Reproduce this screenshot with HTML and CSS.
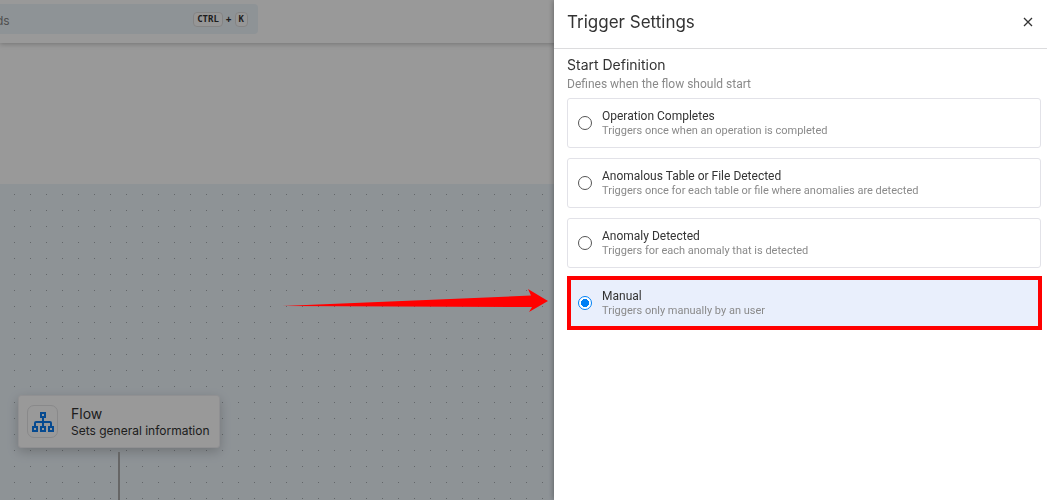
FILE: index.html
```html
<!DOCTYPE html>
<html lang="en">
<head>
<meta charset="utf-8">
<title>Trigger Settings</title>
<link rel="stylesheet" href="styles.css">
</head>
<body>
<div class="app">
  <header class="topbar">
    <div class="search">
      <input class="search-input" type="text" aria-label="Search" value="ds">
      <span class="shortcut"><kbd>CTRL</kbd><span>+</span><kbd>K</kbd></span>
    </div>
  </header>
  <section class="toolbar"></section>
  <main class="canvas">
    <article class="node">
      <span class="node-icon">
        <svg width="24" height="22" viewBox="0 0 24 22" fill="none" stroke="#0b7cf0" stroke-width="2">
          <rect x="10" y="2" width="4" height="4"/>
          <rect x="2" y="16" width="4" height="4"/>
          <rect x="10" y="16" width="4" height="4"/>
          <rect x="18" y="16" width="4" height="4"/>
          <path d="M12 6v10M4 16v-4q0-1 1-1h14q1 0 1 1v4"/>
        </svg>
      </span>
      <span class="node-text">
        <span class="node-title">Flow</span>
        <span class="node-sub">Sets general information</span>
      </span>
    </article>
    <span class="edge"></span>
  </main>
</div>
<div class="scrim"></div>
<svg class="arrow" width="266" height="24" viewBox="0 0 266 24"><path fill="#f00" d="M0 17 249 6.500 246 0 266 12 247 23 250 18Z"/></svg>
<aside class="drawer">
  <header class="drawer-head">
    <h1>Trigger Settings</h1>
    <button class="close" type="button" aria-label="Close">
      <svg width="10" height="10" viewBox="0 0 10 10" fill="none" stroke="#333" stroke-width="1.3"><path d="M1 1l8 8M9 1L1 9"/></svg>
    </button>
  </header>
  <form class="drawer-body">
    <h2>Start Definition</h2>
    <p class="hint">Defines when the flow should start</p>
    <div class="options">
      <label class="option"><input type="radio" name="start"><span class="option-text"><span class="option-title">Operation Completes</span><span class="option-sub">Triggers once when an operation is completed</span></span></label>
      <label class="option"><input type="radio" name="start"><span class="option-text"><span class="option-title">Anomalous Table or File Detected</span><span class="option-sub">Triggers once for each table or file where anomalies are detected</span></span></label>
      <label class="option"><input type="radio" name="start"><span class="option-text"><span class="option-title">Anomaly Detected</span><span class="option-sub">Triggers for each anomaly that is detected</span></span></label>
      <label class="option selected"><input type="radio" name="start" checked><span class="option-text"><span class="option-title">Manual</span><span class="option-sub">Triggers only manually by an user</span></span></label>
    </div>
  </form>
</aside>
</body>
</html>
```
FILE: styles.css
```css
* { box-sizing: border-box; }
body {
  margin: 0;
  font-family: Inter, "Liberation Sans", sans-serif;
  color: #333;
  overflow: hidden;
}
h1, h2, p { margin: 0; font-weight: 400; }

.app { display: flex; flex-direction: column; height: 100vh; background: #fff; }
.topbar {
  padding: 4px 0 9px;
  box-shadow: 0 1px 5px rgba(0, 0, 0, .25);
}
.search {
  display: flex;
  align-items: center;
  width: 258px;
  height: 30px;
  padding-right: 10px;
  background: #edf5fb;
  border-radius: 0 4px 4px 0;
}
.search-input {
  flex: 1;
  min-width: 0;
  margin-left: -4px;
  padding: 2px 0 0;
  border: 0;
  background: none;
  font: 12px Inter, sans-serif;
  color: #858585;
}
.shortcut { display: flex; align-items: center; gap: 3px; font: 700 10px "Noto Sans", sans-serif; }
kbd {
  padding: 0 3px;
  border: 1px solid #ddd;
  border-radius: 4px;
  background: #fafafa;
  font: 700 9px/13px "DejaVu Sans Mono", monospace;
}
.toolbar { flex: 0 0 141px; }
.canvas {
  flex: 1;
  padding: 211px 0 0 18px;
  background: #edf5fb radial-gradient(circle at 0 0, #a5abb0 0, #a5abb0 1px, transparent 1px) 14px 10px / 16px 16px;
}
.node {
  display: flex;
  align-items: center;
  gap: 13px;
  width: 202px;
  height: 53px;
  padding: 0 8px;
  background: #fff;
  border: 1px solid #f0f0f4;
  border-radius: 3px;
  box-shadow: 0 4px 12px rgba(0, 0, 0, .2);
}
.node-icon {
  display: grid;
  place-items: center;
  flex: 0 0 31px;
  height: 33px;
  border: 1px solid #e4e4e6;
  border-radius: 7px;
}
.node-text { display: flex; flex-direction: column; white-space: nowrap; }
.node-title { font-size: 14px; line-height: 18px; }
.node-sub { font-size: 12px; line-height: 16px; }
.edge { display: block; width: 2px; height: 60px; margin: 4px 0 0 100px; background: #aaa; }

.scrim { position: fixed; inset: 0; background: rgba(0, 0, 0, .4); }
.arrow { position: fixed; right: 499px; top: 289px; z-index: 2; }

.drawer {
  position: fixed;
  top: 0;
  right: 0;
  bottom: 0;
  width: 493px;
  background: #fff;
  box-shadow: 0 0 6px rgba(0, 0, 0, .4);
}
.drawer-head {
  display: flex;
  align-items: center;
  justify-content: space-between;
  height: 49px;
  padding: 0 13px 4px;
  border-bottom: 1px solid #dcdcde;
}
h1 { font-size: 17px; line-height: 24px; }
.close { display: grid; place-items: center; width: 12px; height: 12px; padding: 0; border: 0; background: none; }
.drawer-body { padding: 6px 6px 0 13px; }
h2 { font-size: 14px; line-height: 20px; }
.hint { font: 12px/18px Roboto, sans-serif; color: #8a8a8a; }
.options { display: flex; flex-direction: column; gap: 10px; margin-top: 5px; }
.option {
  position: relative;
  display: flex;
  align-items: center;
  gap: 10px;
  height: 50px;
  padding: 0 10px;
  border: 1px solid #e2e2e8;
  border-radius: 3px;
  font-family: Roboto, sans-serif;
}
.option input {
  appearance: none;
  flex: 0 0 14px;
  height: 14px;
  margin: 0;
  border: 1px solid #555;
  border-radius: 50%;
}
.option-text { display: flex; flex-direction: column; }
.option-title { font-size: 12px; line-height: 16px; }
.option-sub { font-size: 11px; line-height: 14px; color: #8a8a8a; }
.selected { background: #e9effc; }
.option input:checked { border-color: #0080f5; background: radial-gradient(circle, #0080f5 0 4px, #fff 4px); }
.selected::after { content: ""; position: absolute; inset: -3px -2px -3px -1px; border: 4px solid #f00; }
```
